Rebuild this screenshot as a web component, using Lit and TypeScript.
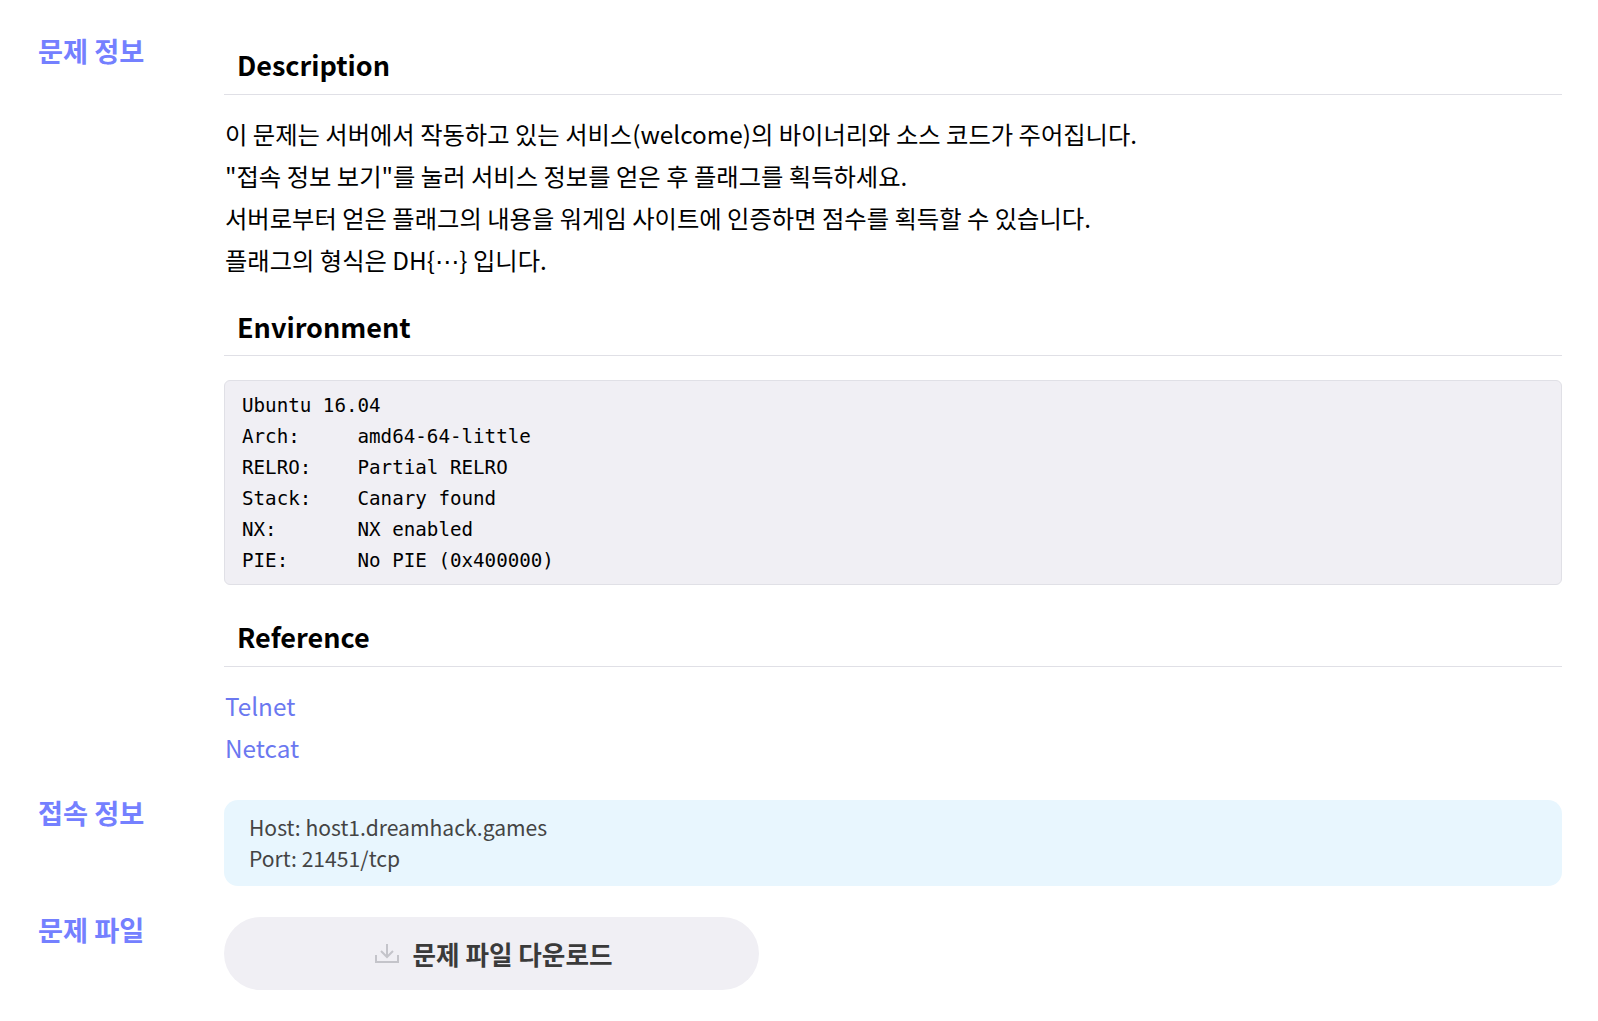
import {css, html, LitElement} from "lit"
import {customElement} from "lit/decorators.js"

@customElement("app-root")
export class AppRoot extends LitElement {
    static styles = css`
      :host {
        display: block;
        min-height: 1021px;
        background: #fff;
        color: #000;
        font-family: "Noto Sans CJK KR", "Noto Sans", sans-serif;
      }

      .page {
        padding: 31px 36px 0 38px;
      }

      .row {
        display: grid;
        grid-template-columns: 186px 1fr;
      }

      .label {
        margin: 0;
        font-size: 27.2px;
        line-height: 38px;
        font-weight: 700;
        color: #7480ff;
      }

      .desc {
        padding-top: 15px;
      }

      h2 {
        margin: 0 0 16.5px;
        padding: 0 13px 10.5px;
        font-size: 27px;
        line-height: 37px;
        font-weight: 700;
        border-bottom: 1px solid #e0e0e6;
      }

      .text {
        padding: 2px 0 0 1px;
      }

      .env {
        margin-top: 27px;
        padding-bottom: 10px;
      }

      .ref {
        padding-bottom: 11.5px;
      }

      p {
        margin: 0;
        font-size: 24.3px;
        line-height: 42px;
      }

      .dots {
        font-family: "DejaVu Sans", sans-serif;
        line-height: 0;
      }

      a {
        display: block;
        font-size: 24.3px;
        line-height: 42px;
        color: #6b78f0;
        text-decoration: none;
      }

      .links {
        padding: 1.5px 0 0 1px;
      }

      pre {
        margin: 23.5px 0 33px;
        padding: 9px 17px 8px;
        background: #f0eff4;
        border: 1px solid #e0e0e6;
        border-radius: 6px;
        font-family: "DejaVu Sans Mono", monospace;
        font-size: 19.2px;
        line-height: 31px;
      }

      .connect {
        margin-top: 24px;
      }

      .host {
        margin-top: 7px;
        padding: 12px 25px;
        background: #e8f6fe;
        border-radius: 14px;
        font-size: 21.1px;
        line-height: 31px;
        color: #444;
      }

      .files {
        margin-top: 23.5px;
      }

      .download {
        display: flex;
        align-items: center;
        justify-content: center;
        gap: 14px;
        box-sizing: border-box;
        width: 535px;
        height: 73px;
        margin-top: 7px;
        padding-left: 4px;
        background: #f0eff4;
        border-radius: 37px;
        font-size: 25.6px;
        font-weight: 700;
        color: #3a3a3a;
      }

      svg {
        display: block;
        fill: none;
        stroke: #c4c4ca;
        stroke-width: 2;
      }
    `

    render() {
        return html`
            <div class="page">
                <div class="row">
                    <h3 class="label">문제 정보</h3>
                    <div class="desc">
                        <h2>Description</h2>
                        <div class="text">
                            <p>이 문제는 서버에서 작동하고 있는 서비스(welcome)의 바이너리와 소스 코드가 주어집니다.</p>
                            <p>"접속 정보 보기"를 눌러 서비스 정보를 얻은 후 플래그를 획득하세요.</p>
                            <p>서버로부터 얻은 플래그의 내용을 워게임 사이트에 인증하면 점수를 획득할 수 있습니다.</p>
                            <p>플래그의 형식은 DH{<span class="dots">⋯</span>} 입니다.</p>
                        </div>
                        <h2 class="env">Environment</h2>
                        <pre>Ubuntu 16.04
Arch:     amd64-64-little
RELRO:    Partial RELRO
Stack:    Canary found
NX:       NX enabled
PIE:      No PIE (0x400000)</pre>
                        <h2 class="ref">Reference</h2>
                        <div class="links">
                            <a href="#">Telnet</a>
                            <a href="#">Netcat</a>
                        </div>
                    </div>
                </div>
                <div class="row connect">
                    <h3 class="label">접속 정보</h3>
                    <div class="host">Host: host1.dreamhack.games<br>Port: 21451/tcp</div>
                </div>
                <div class="row files">
                    <h3 class="label">문제 파일</h3>
                    <div class="download">
                        <svg width="24" height="20" viewBox="0 0 24 20">
                            <path d="M1 12v7h22v-7M12 1v13M6 8l6 6 6-6"/>
                        </svg>
                        <span>문제 파일 다운로드</span>
                    </div>
                </div>
            </div>
        `
    }
}
